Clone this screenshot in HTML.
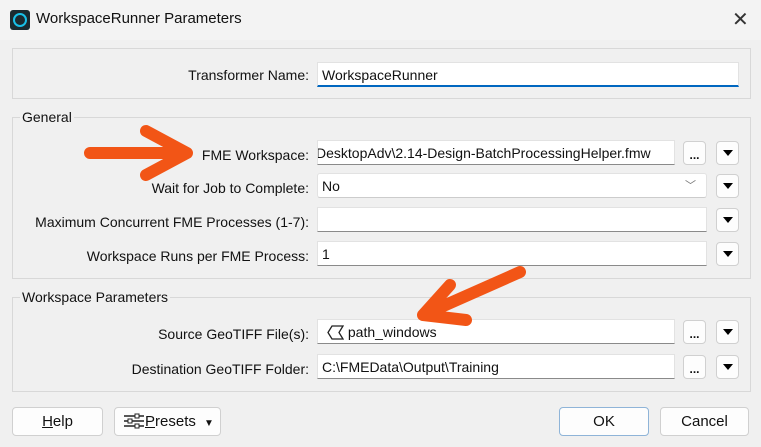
<!DOCTYPE html>
<html><head><style>
body{margin:0;width:761px;height:447px;overflow:hidden;background:#f0f0f0;font-family:"Liberation Sans",sans-serif;font-size:14px;color:#111;position:relative}
.title{position:absolute;left:0;top:0;width:761px;height:40px;background:#f3f3f3}
.abs{position:absolute}
.grp{position:absolute;border:1px solid #d8d8d8;left:12px;width:737px}
.gl{position:absolute;background:#f0f0f0;padding:0 2px;font-size:14px}
.lbl{position:absolute;right:452px;text-align:right;white-space:nowrap}
.inp{position:absolute;left:317px;background:#fff;border:1px solid #e2e2e2;border-bottom:1px solid #8a8a8a;box-sizing:border-box;height:25px;padding:4px 4px;white-space:nowrap;overflow:hidden}
.btn{position:absolute;background:#fdfdfd;border:1px solid #d0d0d0;border-radius:4px;box-sizing:border-box;text-align:center}
.dd{width:23px;height:24px;left:716px}
.dd:after{content:"";position:absolute;left:6px;top:8px;border-left:5px solid transparent;border-right:5px solid transparent;border-top:6px solid #000}
.el{width:23px;height:24px;left:683px;font-weight:bold;font-size:12px;line-height:26px}
.bb{height:29px;top:407px;line-height:27px;font-size:15px}
</style></head><body>
<div class="title"></div>
<div class="abs" style="left:10px;top:10px;width:20px;height:20px;background:#1b2a30;border-radius:3px"></div>
<div class="abs" style="left:13px;top:13px;width:10px;height:10px;border:2px solid #19c0e8;border-radius:50%"></div>
<div class="abs" style="left:36px;top:10px;font-size:15px">WorkspaceRunner Parameters</div>
<div class="abs" style="left:732px;top:7px;font-size:20px;color:#333">✕</div>

<div class="grp" style="top:48px;height:49px"></div>
<div class="lbl" style="top:67px">Transformer Name:</div>
<div class="inp" style="top:62px;width:422px;border-bottom:2px solid #0067c0">WorkspaceRunner</div>

<div class="grp" style="top:117px;height:160px"></div>
<div class="gl" style="left:20px;top:109px">General</div>
<div class="lbl" style="top:147px">FME Workspace:</div>
<div class="inp" style="top:140px;width:358px;text-indent:-6px">DesktopAdv\2.14-Design-BatchProcessingHelper.fmw</div>
<div class="btn el" style="top:141px">...</div><div class="btn dd" style="top:141px"></div>
<div class="lbl" style="top:180px">Wait for Job to Complete:</div>
<div class="inp" style="top:173px;width:390px;border-radius:3px;border-bottom-color:#ccc">No<span style="position:absolute;right:10px;top:3px;color:#777;font-size:11px">﹀</span></div>
<div class="btn dd" style="top:174px"></div>
<div class="lbl" style="top:214px">Maximum Concurrent FME Processes (1-7):</div>
<div class="inp" style="top:207px;width:390px"></div>
<div class="btn dd" style="top:208px"></div>
<div class="lbl" style="top:248px">Workspace Runs per FME Process:</div>
<div class="inp" style="top:241px;width:390px">1</div>
<div class="btn dd" style="top:242px"></div>

<div class="grp" style="top:297px;height:93px"></div>
<div class="gl" style="left:20px;top:289px">Workspace Parameters</div>
<div class="lbl" style="top:326px">Source GeoTIFF File(s):</div>
<div class="inp" style="top:319px;width:358px;padding-left:8px"><svg width="18" height="15" style="vertical-align:-3px"><path d="M6 1H17L13 7.5L17 14H6L2 7.5Z" fill="none" stroke="#222" stroke-width="1.3"/></svg> path_windows</div>
<div class="btn el" style="top:320px">...</div><div class="btn dd" style="top:320px"></div>
<div class="lbl" style="top:361px">Destination GeoTIFF Folder:</div>
<div class="inp" style="top:354px;width:358px">C:\FMEData\Output\Training</div>
<div class="btn el" style="top:355px">...</div><div class="btn dd" style="top:355px"></div>

<div class="btn bb" style="left:12px;width:91px"><u>H</u>elp</div>
<div class="btn bb" style="left:114px;width:107px;text-align:left;padding-left:8px"><svg width="22" height="16" style="vertical-align:-3px"><path d="M1 3H21M1 8H21M1 13H21" stroke="#222" stroke-width="1.5"/><rect x="12" y="1" width="4" height="4" fill="#fff" stroke="#222"/><rect x="5" y="6" width="4" height="4" fill="#fff" stroke="#222"/><rect x="12" y="11" width="4" height="4" fill="#fff" stroke="#222"/></svg><u>P</u>resets <span style="font-size:10px;margin-left:4px">▼</span></div>
<div class="btn bb" style="left:559px;width:90px;border-color:#8fb4d8">OK</div>
<div class="btn bb" style="left:660px;width:89px">Cancel</div>

<svg class="abs" style="left:0;top:0" width="761" height="447">
<g stroke="#f25516" stroke-width="12" stroke-linecap="round" stroke-linejoin="round" fill="none">
<path d="M90 153H185M146 131L187 153L146 175"/>
<path d="M520 272L423 315M450 285L423 315L466 320"/>
</g></svg>
</body></html>
